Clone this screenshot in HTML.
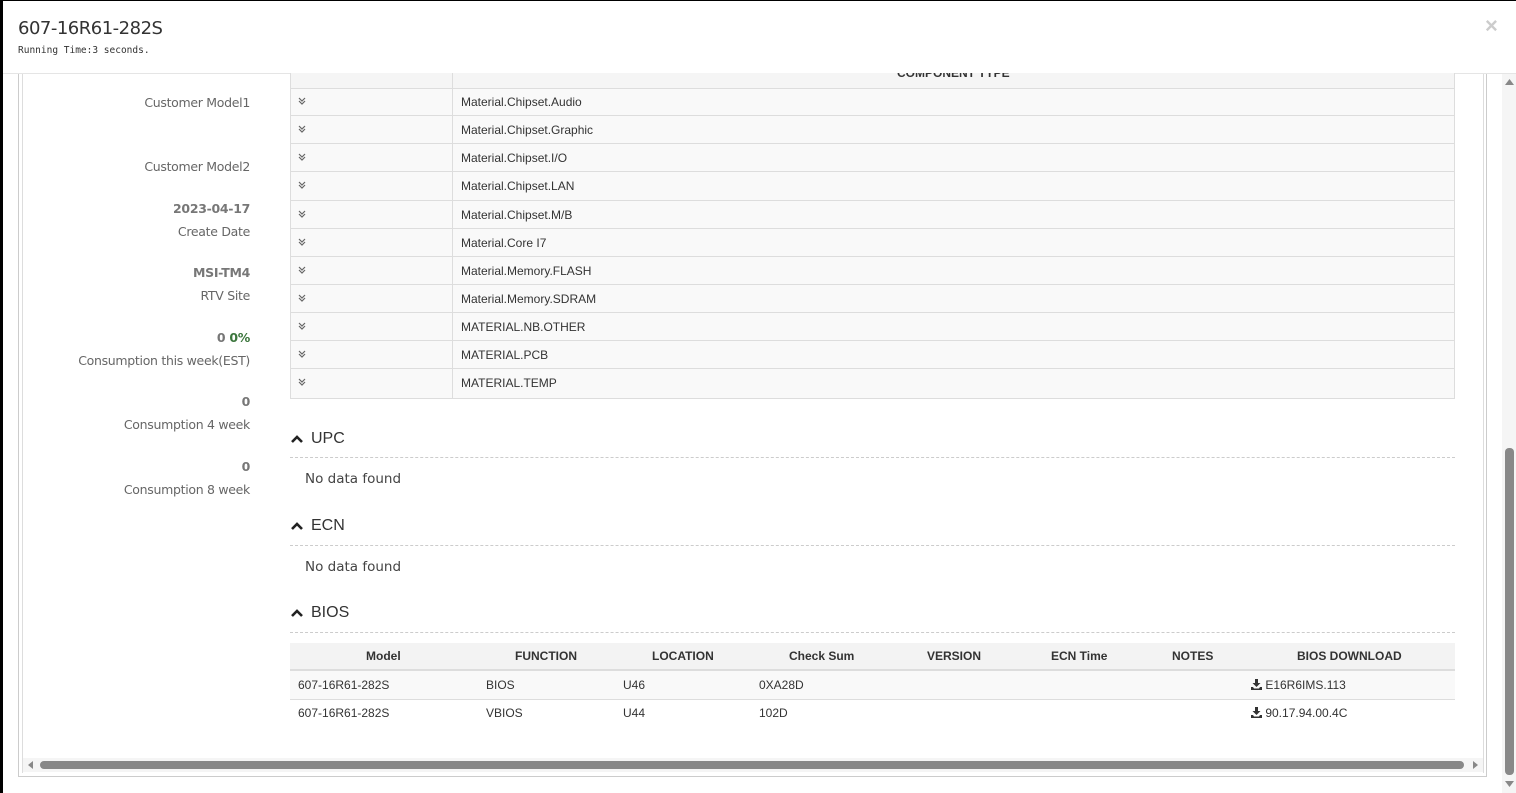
<!DOCTYPE html>
<html><head><meta charset="utf-8">
<style>
*{margin:0;padding:0;box-sizing:border-box}
body{width:1516px;height:793px;overflow:hidden;background:#fff;font-family:"Liberation Sans",sans-serif;position:relative}
.abs{position:absolute}
.lbl{position:absolute;right:1266px;text-align:right;font-family:"DejaVu Sans","Liberation Sans",sans-serif;font-size:12.5px;color:#666;white-space:nowrap;letter-spacing:-0.3px}
.val{position:absolute;right:1266px;text-align:right;font-family:"DejaVu Sans","Liberation Sans",sans-serif;font-size:12.5px;color:#777;font-weight:bold;white-space:nowrap;letter-spacing:-0.3px}
.row{position:absolute;left:290px;width:1165px;height:28px;border-bottom:1px solid #ddd;background:#f9f9f9;font-size:12px;color:#333}
.row .c1{position:absolute;left:0;top:0;width:163px;height:100%;border-left:1px solid #ddd;border-right:1px solid #ddd}
.row .c2{position:absolute;left:171px;top:7px}
.row .end{position:absolute;right:0;top:0;height:100%;border-right:1px solid #ddd}
.sec{position:absolute;left:290px;font-size:16px;color:#333}
.dash{position:absolute;left:290px;width:1165px;border-top:1px dashed #ccc}
.nd{position:absolute;left:305px;font-family:"DejaVu Sans","Liberation Sans",sans-serif;font-size:13.5px;color:#444}
.th{position:absolute;top:649px;font-size:12px;font-weight:bold;color:#333}
.td{position:absolute;font-size:12px;color:#333}
</style></head><body>
<div class="abs" style="left:0;top:0;width:3px;height:793px;background:#000"></div>
<div class="abs" style="left:0;top:0;width:1516px;height:1px;background:#000"></div>
<div class="abs" style="left:18px;top:18px;font-family:'DejaVu Sans','Liberation Sans',sans-serif;font-size:18px;color:#333;letter-spacing:-0.5px">607-16R61-282S</div>
<div class="abs" style="left:18px;top:45px;font-family:'DejaVu Sans Mono','Liberation Mono',monospace;font-size:9.5px;color:#333">Running Time:3 seconds.</div>
<div class="abs" style="left:1485px;top:13px;font-size:22px;color:#ccc;font-weight:bold">×</div>
<div class="abs" style="left:3px;top:73px;width:1513px;height:1px;background:#e5e5e5"></div>
<div class="abs" style="left:18px;top:74px;width:1469px;height:703px;border:1px solid #ccc;border-top:none"></div>
<div class="abs" style="left:22px;top:74px;width:1px;height:699px;background:#ddd"></div>
<div class="abs" style="left:1483px;top:74px;width:1px;height:699px;background:#ddd"></div>

<div class="lbl" style="top:95px">Customer Model1</div>
<div class="lbl" style="top:159px">Customer Model2</div>
<div class="val" style="top:201px">2023-04-17</div>
<div class="lbl" style="top:224px">Create Date</div>
<div class="val" style="top:265px">MSI-TM4</div>
<div class="lbl" style="top:288px">RTV Site</div>
<div class="val" style="top:330px">0 <span style="color:#3c763d">0%</span></div>
<div class="lbl" style="top:353px">Consumption this week(EST)</div>
<div class="val" style="top:394px">0</div>
<div class="lbl" style="top:417px">Consumption 4 week</div>
<div class="val" style="top:459px">0</div>
<div class="lbl" style="top:482px">Consumption 8 week</div>

<div class="row" style="top:73px;height:16px;background:#f5f5f5;overflow:hidden"><div class="c1"></div><div class="end"></div><div class="abs" style="left:607px;top:-7px;font-size:12px;font-weight:bold;color:#333">COMPONENT TYPE</div></div>
<div class="row" style="top:88px;border-top:1px solid #ddd"><div class="c1"></div><div class="end"></div><div class="c2" style="top:6px">Material.Chipset.Audio</div></div>
<div class="row" style="top:116px"><div class="c1"></div><div class="end"></div><div class="c2">Material.Chipset.Graphic</div></div>
<div class="row" style="top:144px"><div class="c1"></div><div class="end"></div><div class="c2">Material.Chipset.I/O</div></div>
<div class="row" style="top:172px;height:29px"><div class="c1"></div><div class="end"></div><div class="c2">Material.Chipset.LAN</div></div>
<div class="row" style="top:201px"><div class="c1"></div><div class="end"></div><div class="c2">Material.Chipset.M/B</div></div>
<div class="row" style="top:229px"><div class="c1"></div><div class="end"></div><div class="c2">Material.Core I7</div></div>
<div class="row" style="top:257px"><div class="c1"></div><div class="end"></div><div class="c2">Material.Memory.FLASH</div></div>
<div class="row" style="top:285px"><div class="c1"></div><div class="end"></div><div class="c2">Material.Memory.SDRAM</div></div>
<div class="row" style="top:313px"><div class="c1"></div><div class="end"></div><div class="c2">MATERIAL.NB.OTHER</div></div>
<div class="row" style="top:341px"><div class="c1"></div><div class="end"></div><div class="c2">MATERIAL.PCB</div></div>
<div class="row" style="top:369px;height:30px"><div class="c1"></div><div class="end"></div><div class="c2">MATERIAL.TEMP</div></div>
<svg class="abs" style="left:297px;top:96px" width="10" height="300">
<g fill="none" stroke="#666" stroke-width="1.2">
<path d="M2 2l3 3l3-3M2 5l3 3l3-3"/><path transform="translate(0,28)" d="M2 2l3 3l3-3M2 5l3 3l3-3"/>
<path transform="translate(0,56)" d="M2 2l3 3l3-3M2 5l3 3l3-3"/><path transform="translate(0,84)" d="M2 2l3 3l3-3M2 5l3 3l3-3"/>
<path transform="translate(0,113)" d="M2 2l3 3l3-3M2 5l3 3l3-3"/><path transform="translate(0,141)" d="M2 2l3 3l3-3M2 5l3 3l3-3"/>
<path transform="translate(0,169)" d="M2 2l3 3l3-3M2 5l3 3l3-3"/><path transform="translate(0,197)" d="M2 2l3 3l3-3M2 5l3 3l3-3"/>
<path transform="translate(0,225)" d="M2 2l3 3l3-3M2 5l3 3l3-3"/><path transform="translate(0,253)" d="M2 2l3 3l3-3M2 5l3 3l3-3"/>
<path transform="translate(0,281)" d="M2 2l3 3l3-3M2 5l3 3l3-3"/>
</g></svg>

<svg class="abs" style="left:290px;top:434px" width="14" height="10"><path d="M2 8l5-5l5 5" fill="none" stroke="#222" stroke-width="2.6"/></svg>
<div class="sec" style="top:430px;left:311px">UPC</div>
<div class="dash" style="top:457px"></div>
<div class="nd" style="top:471px">No data found</div>
<svg class="abs" style="left:290px;top:521px" width="14" height="10"><path d="M2 8l5-5l5 5" fill="none" stroke="#222" stroke-width="2.6"/></svg>
<div class="sec" style="top:517px;left:311px">ECN</div>
<div class="dash" style="top:545px"></div>
<div class="nd" style="top:559px">No data found</div>
<svg class="abs" style="left:290px;top:608px" width="14" height="10"><path d="M2 8l5-5l5 5" fill="none" stroke="#222" stroke-width="2.6"/></svg>
<div class="sec" style="top:604px;left:311px">BIOS</div>
<div class="dash" style="top:632px"></div>

<div class="abs" style="left:290px;top:643px;width:1165px;height:28px;background:#f3f3f3;border-bottom:2px solid #ddd"></div>
<div class="abs" style="left:290px;top:671px;width:1165px;height:29px;background:#f9f9f9;border-bottom:1px solid #ddd"></div>
<div class="th" style="left:366px">Model</div>
<div class="th" style="left:515px">FUNCTION</div>
<div class="th" style="left:652px">LOCATION</div>
<div class="th" style="left:789px">Check Sum</div>
<div class="th" style="left:927px">VERSION</div>
<div class="th" style="left:1051px">ECN Time</div>
<div class="th" style="left:1172px">NOTES</div>
<div class="th" style="left:1297px">BIOS DOWNLOAD</div>
<div class="td" style="left:298px;top:678px">607-16R61-282S</div>
<div class="td" style="left:486px;top:678px">BIOS</div>
<div class="td" style="left:623px;top:678px">U46</div>
<div class="td" style="left:759px;top:678px">0XA28D</div>
<div class="td" style="left:1251px;top:678px"><svg width="11" height="11" style="vertical-align:-1px"><path d="M4 0h3v4h2.5L5.5 8L1.5 4H4z M0 8h2l1 1.5h5L9 8h2v3H0z" fill="#333"/></svg> E16R6IMS.113</div>
<div class="td" style="left:298px;top:706px">607-16R61-282S</div>
<div class="td" style="left:486px;top:706px">VBIOS</div>
<div class="td" style="left:623px;top:706px">U44</div>
<div class="td" style="left:759px;top:706px">102D</div>
<div class="td" style="left:1251px;top:706px"><svg width="11" height="11" style="vertical-align:-1px"><path d="M4 0h3v4h2.5L5.5 8L1.5 4H4z M0 8h2l1 1.5h5L9 8h2v3H0z" fill="#333"/></svg> 90.17.94.00.4C</div>

<div class="abs" style="left:23px;top:758px;width:1460px;height:14px;background:#f5f5f5"></div>
<svg class="abs" style="left:27px;top:761px" width="8" height="8"><path d="M6 0v8L1 4z" fill="#888"/></svg>
<div class="abs" style="left:40px;top:761px;width:1424px;height:8px;background:#888;border-radius:4px"></div>
<svg class="abs" style="left:1471px;top:761px" width="8" height="8"><path d="M2 0v8l5-4z" fill="#888"/></svg>

<div class="abs" style="left:1502px;top:74px;width:14px;height:719px;background:#f5f5f5"></div>
<svg class="abs" style="left:1505px;top:78px" width="9" height="8"><path d="M0 7h9L4.5 1z" fill="#888"/></svg>
<div class="abs" style="left:1505px;top:448px;width:9px;height:327px;background:#888;border-radius:4px"></div>
<svg class="abs" style="left:1505px;top:780px" width="9" height="8"><path d="M0 1h9L4.5 7z" fill="#888"/></svg>
</body></html>
